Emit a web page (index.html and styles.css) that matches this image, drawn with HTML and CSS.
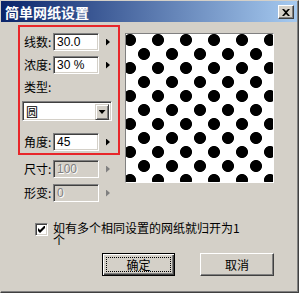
FILE: index.html
```html
<!DOCTYPE html>
<html lang="zh-CN">
<head>
    <meta charset="UTF-8">
    <title>简单网纸设置</title>
    <link rel="stylesheet" href="styles.css">
</head>
<body>
    <div class="window">
        <div class="titlebar">
            <span class="title">简单网纸设置</span>
            <span class="close">
                <svg width="8" height="7" viewBox="0 0 8 7"><path d="M0 0 L2 0 L4 2 L6 0 L8 0 L5 3.5 L8 7 L6 7 L4 5 L2 7 L0 7 L3 3.5 Z" fill="#000"/></svg>
            </span>
        </div>
        <div class="content">
            <div class="top">
                <div class="left">
                    <div class="params">
                        <div class="row">
                            <span class="label">线数:</span>
                            <span class="field">30.0</span>
                            <span class="arrow"></span>
                        </div>
                        <div class="row gap">
                            <span class="label">浓度:</span>
                            <span class="field">30 %</span>
                            <span class="arrow"></span>
                        </div>
                        <div class="typelabel">类型:</div>
                        <div class="select">
                            <span class="selval">圆</span>
                            <span class="drop"><span class="down"></span></span>
                        </div>
                        <div class="row angle">
                            <span class="label">角度:</span>
                            <span class="field">45</span>
                            <span class="arrow"></span>
                        </div>
                    </div>
                    <div class="row off first">
                        <span class="label">尺寸:</span>
                        <span class="field">100</span>
                        <span class="arrow"></span>
                    </div>
                    <div class="row off">
                        <span class="label">形变:</span>
                        <span class="field">0</span>
                        <span class="arrow"></span>
                    </div>
                </div>
                <div class="preview"></div>
            </div>
            <div class="check">
                <span class="box">
                    <svg width="7" height="7" viewBox="0 0 7 7"><path d="M0 2 L2 4 L7 -1 L7 2 L2 7 L0 5 Z" fill="#000"/></svg>
                </span>
                <span class="checktext">如有多个相同设置的网纸就归开为1个</span>
            </div>
            <div class="buttons">
                <div class="btn default"><span class="focus">确定</span></div>
                <div class="btn">取消</div>
            </div>
        </div>
    </div>
</body>
</html>
```

FILE: styles.css
```css
* {
    margin: 0;
    padding: 0;
    box-sizing: border-box;
}
body {
    background: #d4d0c8;
    font-family: "Noto Sans CJK SC", "DejaVu Sans", sans-serif;
    font-size: 12px;
    color: #000;
}
.window {
    width: 299px;
    height: 293px;
    border: 1px solid;
    border-color: #d4d0c8 #404040 #404040 #d4d0c8;
    box-shadow: inset -1px -1px #808080;
    background: #d4d0c8;
}
.titlebar {
    height: 21px;
    margin-right: 1px;
    background: linear-gradient(to right, #0a246a, #a6caf0);
    display: flex;
    align-items: center;
    justify-content: space-between;
    padding: 0 3px 0 4px;
}
.title {
    color: #fff;
    font-weight: bold;
    font-size: 14px;
    line-height: 16px;
}
.close {
    width: 16px;
    height: 14px;
    background: #d4d0c8;
    border: 1px solid;
    border-color: #fff #404040 #404040 #fff;
    box-shadow: inset -1px -1px #808080;
    display: flex;
    align-items: center;
    justify-content: center;
    margin-top: 1px;
}
.content {
    padding: 3px 0 0 17px;
}
.top {
    display: flex;
}
.left {
    width: 102px;
}
.params {
    height: 130px;
    border: 2px solid #e8262a;
    padding: 6px 0 0 2px;
}
.row {
    display: flex;
    align-items: center;
    height: 18px;
}
.row.gap {
    margin-top: 5px;
}
.row.angle {
    margin-top: 12px;
}
.left > .row {
    padding-left: 4px;
}
.row.first {
    margin-top: 5px;
}
.row.off + .row.off {
    margin-top: 6px;
}
.label {
    width: 31px;
    padding-left: 2px;
    line-height: 12px;
    white-space: nowrap;
}
.field {
    width: 46px;
    height: 18px;
    background: #fff;
    border: 1px solid;
    border-color: #808080 #fff #fff #808080;
    box-shadow: inset 1px 1px #404040, inset -1px -1px #d4d0c8;
    font-family: "Liberation Sans", sans-serif;
    font-size: 12px;
    line-height: 16px;
    padding-left: 3px;
}
.arrow {
    width: 4px;
    height: 7px;
    margin-left: 7px;
    background: #000;
    clip-path: polygon(0 0, 100% 50%, 0 100%);
}
.off .field {
    background: #d4d0c8;
    color: #808080;
    text-shadow: 1px 1px #fff;
}
.off .arrow {
    background: #808080;
}
.typelabel {
    margin-top: 4px;
    height: 18px;
    line-height: 18px;
    padding-left: 2px;
}
.select {
    margin-top: 5px;
    width: 90px;
    height: 20px;
    background: #fff;
    border: 1px solid;
    border-color: #808080 #fff #fff #808080;
    box-shadow: inset 1px 1px #404040, inset -1px -1px #d4d0c8;
    display: flex;
    justify-content: space-between;
    padding: 2px;
}
.selval {
    line-height: 16px;
    padding-left: 1px;
}
.drop {
    width: 14px;
    height: 16px;
    background: #d4d0c8;
    border: 1px solid;
    border-color: #d4d0c8 #404040 #404040 #d4d0c8;
    box-shadow: inset 1px 1px #fff, inset -1px -1px #808080;
    display: flex;
    align-items: center;
    justify-content: center;
}
.down {
    width: 7px;
    height: 4px;
    background: #000;
    clip-path: polygon(0 0, 100% 0, 50% 100%);
}
.preview {
    width: 149px;
    height: 150px;
    margin: 8px 0 0 5px;
    border: 1px solid;
    border-color: #808080 #fff #fff #808080;
    background-color: #fff;
    background-image:
        radial-gradient(circle, #000 5.6px, transparent 6.4px),
        radial-gradient(circle, #000 5.6px, transparent 6.4px);
    background-size: 28px 28px;
    background-position: -10px -8px, 4px 6px;
}
.check {
    display: flex;
    margin: 21px 0 0 17px;
}
.box {
    width: 13px;
    height: 13px;
    background: #fff;
    border: 1px solid;
    border-color: #808080 #fff #fff #808080;
    box-shadow: inset 1px 1px #404040, inset -1px -1px #d4d0c8;
    display: flex;
    align-items: center;
    justify-content: center;
    flex-shrink: 0;
}
.checktext {
    width: 192px;
    margin: -1px 0 0 5px;
    line-height: 12px;
}
.buttons {
    display: flex;
    gap: 25px;
    margin: 7px 0 0 84px;
}
.btn {
    width: 74px;
    height: 23px;
    border: 1px solid;
    border-color: #fff #404040 #404040 #fff;
    box-shadow: inset -1px -1px #808080;
    display: flex;
    align-items: center;
    justify-content: center;
}
.btn.default {
    width: 73px;
    border: 1px solid #000;
    box-shadow: inset 1px 1px #fff, inset -1px -1px #404040, inset -2px -2px #808080;
    padding: 3px;
}
.focus {
    width: 100%;
    height: 100%;
    border: 1px dotted #000;
    display: flex;
    align-items: center;
    justify-content: center;
}
```
